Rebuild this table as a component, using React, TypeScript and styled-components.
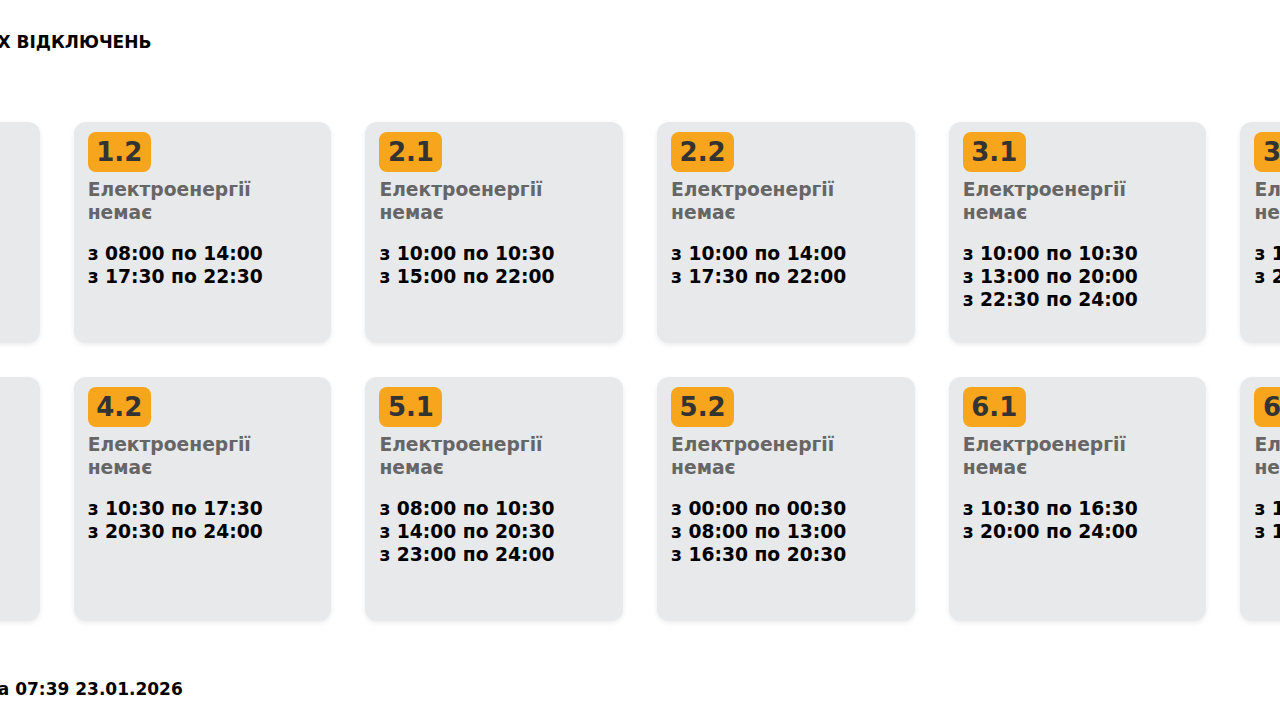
import React from 'react';
import styled, { createGlobalStyle } from 'styled-components';

type Group = {
	id: string;
	intervals: string[];
};

const groups: Group[] = [
	{ id: '1.1', intervals: ['з 07:30 по 13:00', 'з 16:30 по 22:00'] },
	{ id: '1.2', intervals: ['з 08:00 по 14:00', 'з 17:30 по 22:30'] },
	{ id: '2.1', intervals: ['з 10:00 по 10:30', 'з 15:00 по 22:00'] },
	{ id: '2.2', intervals: ['з 10:00 по 14:00', 'з 17:30 по 22:00'] },
	{ id: '3.1', intervals: ['з 10:00 по 10:30', 'з 13:00 по 20:00', 'з 22:30 по 24:00'] },
	{ id: '3.2', intervals: ['з 10:00 по 16:30', 'з 20:00 по 24:00'] },
	{ id: '4.1', intervals: ['з 00:00 по 03:30', 'з 07:00 по 10:30', 'з 14:00 по 20:30', 'з 23:30 по 24:00'] },
	{ id: '4.2', intervals: ['з 10:30 по 17:30', 'з 20:30 по 24:00'] },
	{ id: '5.1', intervals: ['з 08:00 по 10:30', 'з 14:00 по 20:30', 'з 23:00 по 24:00'] },
	{ id: '5.2', intervals: ['з 00:00 по 00:30', 'з 08:00 по 13:00', 'з 16:30 по 20:30'] },
	{ id: '6.1', intervals: ['з 10:30 по 16:30', 'з 20:00 по 24:00'] },
	{ id: '6.2', intervals: ['з 13:00 по 19:30', 'з 15:00 по 22:00'] },
];

function App() {
	return (
		<>
			<GlobalStyle />
			<Page>
				<Board>
					<Title>ГРАФІК ПОГОДИННИХ ВІДКЛЮЧЕНЬ</Title>
					<Grid>
						{groups.map((group) => (
							<Card key={group.id}>
								<Badge>{group.id}</Badge>
								<Status>Електроенергії немає</Status>
								<Times>
									{group.intervals.map((interval) => (
										<div key={interval}>{interval}</div>
									))}
								</Times>
							</Card>
						))}
					</Grid>
					<Updated>Інформація станом на 07:39 23.01.2026</Updated>
				</Board>
			</Page>
		</>
	);
}

const GlobalStyle = createGlobalStyle`
	html, body {
		margin: 0;
		padding: 0;
		background: #ffffff;
		overflow: hidden;
	}
	body {
		font-family: "DejaVu Sans", "Noto Sans", sans-serif;
		color: #000;
	}
`;

const Page = styled.div`
	width: 100vw;
	height: 100vh;
	display: flex;
	justify-content: center;
	overflow: hidden;
`;

const Board = styled.div`
	flex: none;
	width: 1716px;
	display: flex;
	flex-direction: column;
	padding-top: 32px;
`;

const Title = styled.h1`
	margin: 0 0 0 10px;
	font-size: 17px;
	font-weight: 700;
	line-height: 20px;
`;

const Grid = styled.div`
	display: grid;
	grid-template-columns: repeat(6, 257.6px);
	column-gap: 34.1px;
	row-gap: 34px;
	margin-top: 70px;
`;

const Card = styled.div`
	background: #e8e9eb;
	border-radius: 12px;
	box-shadow: 0 2px 5px rgba(0, 0, 0, 0.08);
	padding: 10px 14px 32px;
	display: flex;
	flex-direction: column;
	align-items: flex-start;
`;

const Badge = styled.div`
	background: #f7a51c;
	color: #333333;
	border-radius: 8px;
	height: 40px;
	padding: 0 8.5px;
	font-size: 26px;
	font-weight: 700;
	line-height: 40px;
`;

const Status = styled.div`
	margin-top: 6px;
	color: #666666;
	font-size: 18.7px;
	font-weight: 700;
	line-height: 23px;
`;

const Times = styled.div`
	margin-top: 18px;
	font-size: 18.7px;
	font-weight: 700;
	line-height: 23px;
	color: #000;
`;

const Updated = styled.div`
	margin: 58px 0 0 10px;
	font-size: 17px;
	font-weight: 700;
	line-height: 20px;
`;

export default App;
